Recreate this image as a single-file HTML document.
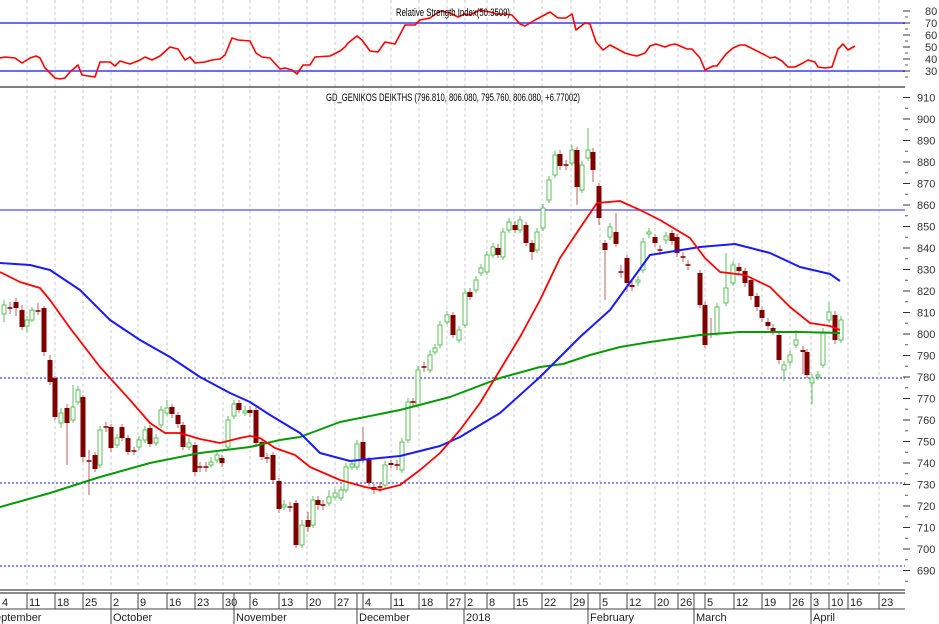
<!DOCTYPE html>
<html><head><meta charset="utf-8"><style>
html,body{margin:0;padding:0;background:#fff;width:939px;height:624px;overflow:hidden}
svg{display:block;font-family:"Liberation Sans",sans-serif}
</style></head><body>
<svg id="s" width="939" height="624" xmlns="http://www.w3.org/2000/svg"></svg>
<script>
var s=document.getElementById('s'),h='';
var W=905;
var ticks=[27,55,83,111,138,167,195,223,250,279,307,335,363,391,419,447,465,487,514,542,571,600,627,655,678,705,734,762,790,811,829,848,879];
// grid
ticks.forEach(function(x){h+='<line x1="'+x+'" y1="0" x2="'+x+'" y2="588" stroke="#c8c8c8" stroke-dasharray="3,3"/>';});
// RSI panel
h+='<line x1="0" y1="23" x2="'+W+'" y2="23" stroke="#6b6bf5" stroke-width="2"/>';
h+='<line x1="0" y1="71" x2="'+W+'" y2="71" stroke="#6b6bf5" stroke-width="2"/>';
h+='<line x1="0" y1="87" x2="'+W+'" y2="87" stroke="#333" stroke-width="1.2"/>';
var rsi=[[0,58],[5,57],[15,58],[22,63],[30,58],[36,56],[40,58],[45,68],[55,78],[60,79],[65,78],[70,72],[78,65],[82,75],[95,77],[100,62],[110,62],[115,66],[120,61],[130,64],[140,60],[145,57],[152,60],[160,56],[170,47],[178,49],[185,60],[190,57],[195,63],[205,62],[212,60],[220,59],[225,55],[232,38],[238,40],[250,41],[256,53],[262,57],[270,58],[280,69],[285,68],[292,70],[297,74],[303,65],[310,65],[315,57],[330,56],[340,51],[345,47],[348,43],[357,36],[362,40],[370,51],[378,52],[385,42],[395,44],[405,25],[415,25],[420,20],[430,18],[440,11],[450,13],[458,17],[465,14],[470,15],[480,10],[490,12],[497,14],[505,14],[512,15],[520,24],[525,26],[535,20],[550,12],[558,18],[566,18],[572,14],[576,30],[585,23],[590,24],[596,42],[603,50],[610,45],[625,53],[632,55],[637,56],[645,53],[650,46],[656,44],[665,47],[670,45],[675,44],[680,46],[687,49],[692,49],[700,58],[705,70],[713,66],[717,66],[726,54],[733,48],[740,45],[745,45],[755,50],[765,55],[770,58],[775,57],[782,61],[788,67],[795,67],[803,63],[808,60],[815,62],[818,67],[825,68],[832,67],[838,49],[843,44],[848,50],[855,46]];
function pl(a,c,w){return '<polyline fill="none" stroke="'+c+'" stroke-width="'+w+'" stroke-linejoin="round" points="'+a.map(function(p){return p.join(',')}).join(' ')+'"/>';}
h+=pl(rsi,'#f00',1.6);
h+='<text x="396" y="16" font-size="11" textLength="114" lengthAdjust="spacingAndGlyphs" fill="#000">Relative Strength Index(50.3509)</text>';
h+='<text x="326" y="101" font-size="11" textLength="254" lengthAdjust="spacingAndGlyphs" fill="#000">GD_GENIKOS DEIKTHS (796.810, 806.080, 795.760, 806.080, +6.77002)</text>';
// horizontal levels
h+='<line x1="0" y1="210" x2="'+W+'" y2="210" stroke="#6b6bf5" stroke-width="1.6"/>';
[378,483,566].forEach(function(y){h+='<line x1="0" y1="'+y+'" x2="'+W+'" y2="'+y+'" stroke="#4040f0" stroke-width="1.2" stroke-dasharray="2,2"/>';});
// MAs
var g=[[0,507],[50,493],[100,477],[150,463],[200,453],[250,447],[280,440],[300,437],[340,422],[400,410],[450,397],[500,378],[540,367],[563,364],[590,355],[620,347],[650,342],[700,335],[740,332],[800,332],[840,333]];
var b=[[0,263],[30,265],[50,270],[80,290],[110,320],[140,340],[170,357],[200,377],[230,393],[250,402],[270,415],[300,433],[320,453],[350,461],[400,456],[440,446],[460,437],[500,413],[540,377],[580,337],[610,310],[650,255],[700,247],[735,244],[770,253],[800,267],[830,274],[840,281]];
var r=[[0,272],[20,282],[40,288],[50,300],[70,328],[100,367],[130,400],[150,423],[165,433],[180,433],[200,439],[220,443],[240,438],[250,436],[260,438],[275,448],[295,455],[310,467],[340,480],[365,487],[380,490],[400,485],[420,470],[440,453],[460,430],[480,403],[500,370],[520,337],[540,300],[560,258],[580,228],[597,203],[620,201],[640,210],[660,220],[690,238],[705,258],[720,272],[745,275],[770,287],[790,307],[810,323],[830,326],[840,330]];
// candles [x,o,c,hi,lo]
var C=[[4,314,305,300,322],[10,308,308,302,314],[16,302,308,298,316],[22,310,327,305,330],[27,326,320,316,333],[32,320,310,307,322],[38,311,311,303,315],[44,308,352,306,356],[50,360,382,355,385],[55,378,417,376,420],[61,423,413,408,428],[67,408,423,404,465],[73,420,407,385,423],[78,402,390,386,405],[83,397,457,395,462],[89,461,461,450,495],[95,455,469,452,472],[100,465,430,426,468],[106,427,427,422,432],[111,427,448,424,452],[117,445,438,434,448],[122,427,438,424,441],[128,438,452,435,455],[134,451,451,447,455],[139,447,440,436,450],[145,440,430,426,443],[150,428,444,425,447],[156,443,438,434,446],[161,425,410,406,428],[167,413,408,400,416],[172,407,414,404,418],[178,415,424,412,428],[183,425,447,422,450],[189,447,443,438,450],[195,445,472,442,476],[200,467,467,462,472],[206,467,467,462,472],[211,465,462,457,468],[217,460,455,450,463],[222,458,463,455,467],[228,447,420,416,450],[234,416,404,400,419],[239,403,410,400,413],[245,413,411,406,416],[250,410,413,406,417],[256,410,443,406,447],[262,442,457,439,460],[267,458,458,453,463],[273,455,480,452,484],[279,481,509,478,513],[284,507,505,500,510],[290,507,507,502,512],[296,503,545,500,548],[302,545,525,520,548],[308,520,527,512,532],[313,525,500,496,528],[318,500,505,496,510],[323,505,505,500,510],[329,503,497,490,506],[335,497,493,489,500],[341,498,490,486,501],[346,490,467,463,493],[352,467,464,460,470],[357,467,444,440,470],[363,442,460,427,463],[369,460,483,457,486],[374,487,490,484,494],[380,487,487,482,492],[385,485,465,461,488],[391,463,465,460,468],[397,465,465,460,470],[402,470,442,438,473],[408,440,402,398,443],[413,402,402,398,406],[418,405,370,366,408],[424,367,367,362,372],[430,370,355,350,373],[435,352,348,344,355],[440,345,325,321,348],[447,322,315,311,325],[453,315,335,312,338],[459,340,330,326,343],[465,325,293,289,328],[470,292,297,288,300],[476,290,280,276,293],[481,273,268,264,276],[487,272,255,251,275],[493,255,247,243,258],[498,248,255,244,258],[503,257,232,228,260],[509,230,222,218,233],[515,225,230,221,233],[520,230,220,216,233],[526,225,243,222,246],[532,243,252,240,260],[537,250,232,228,253],[543,228,208,204,231],[549,200,180,176,203],[555,175,155,151,178],[560,154,166,150,170],[566,165,165,160,170],[572,163,150,145,166],[577,150,187,147,205],[582,190,165,161,193],[588,158,150,128,161],[593,152,170,148,182],[599,186,218,183,225],[605,243,250,240,300],[610,237,227,223,240],[616,232,244,213,247],[621,272,272,265,278],[627,258,283,255,292],[632,285,287,281,291],[638,282,280,276,286],[643,270,242,238,273],[649,234,232,228,238],[655,237,243,234,247],[660,250,250,245,255],[666,240,236,232,244],[672,233,241,230,245],[677,237,253,234,257],[683,257,257,252,262],[688,265,265,260,270],[700,273,305,270,308],[705,305,345,302,348],[711,334,334,318,338],[717,333,307,303,336],[726,303,288,253,306],[733,283,265,261,286],[739,267,271,263,275],[745,271,283,268,287],[751,280,296,277,300],[757,296,307,293,311],[762,310,318,307,322],[768,322,326,318,330],[773,328,331,324,335],[779,335,360,332,364],[784,370,365,361,381],[790,362,355,351,366],[796,345,340,330,348],[803,350,352,346,374],[807,352,375,349,378],[812,383,378,374,404],[818,377,375,371,380],[823,365,332,328,368],[829,320,312,302,323],[835,315,340,311,344],[841,340,320,316,343]];
C.forEach(function(c){var x=c[0],o=c[1],cl=c[2],hi=c[3],lo=c[4];var up=cl<o||(cl==o&&false);var top=Math.min(o,cl),bh=Math.max(Math.abs(cl-o),1);
 if(cl==o){h+='<line x1="'+x+'" y1="'+hi+'" x2="'+x+'" y2="'+lo+'" stroke="#c06060"/><line x1="'+(x-2.5)+'" y1="'+o+'" x2="'+(x+2.5)+'" y2="'+o+'" stroke="#800000" stroke-width="1.5"/>';return;}
 if(up){h+='<line x1="'+x+'" y1="'+hi+'" x2="'+x+'" y2="'+lo+'" stroke="#5cc05c"/><rect x="'+(x-2)+'" y="'+top+'" width="4" height="'+bh+'" fill="#fff" stroke="#5cc05c"/>';}
 else{h+='<line x1="'+x+'" y1="'+hi+'" x2="'+x+'" y2="'+lo+'" stroke="#c06060"/><rect x="'+(x-2.5)+'" y="'+top+'" width="5" height="'+bh+'" fill="#800000"/>';}
});
h+=pl(g,'#089a08',2)+pl(b,'#1a1aff',2)+pl(r,'#f00',1.8);
// right axis
for(var v=30;v<=80;v+=10){var y=23+(70-v)*1.2;h+='<line x1="903" y1="'+y+'" x2="910" y2="'+y+'" stroke="#333"/><text x="925" y="'+(y+4)+'" font-size="11" fill="#333">'+v+'</text>';h+='<line x1="905" y1="'+(y+6)+'" x2="908" y2="'+(y+6)+'" stroke="#555"/>';}
for(var v=690;v<=910;v+=10){var y=205+(860-v)*2.15;h+='<line x1="903" y1="'+y+'" x2="910" y2="'+y+'" stroke="#333"/><text x="917" y="'+(y+4)+'" font-size="11" fill="#333">'+v+'</text>';h+='<line x1="905" y1="'+(y+10.75)+'" x2="908" y2="'+(y+10.75)+'" stroke="#555"/>';}
// bottom axis
h+='<line x1="0" y1="590" x2="'+W+'" y2="590" stroke="#444" stroke-width="1.2"/><line x1="0" y1="593" x2="'+W+'" y2="593" stroke="#444" stroke-width="1.2"/><line x1="0" y1="609" x2="'+W+'" y2="609" stroke="#444"/>';
var lab=['4','11','18','25','2','9','16','23','30','6','13','20','27','4','11','18','27','2','8','15','22','29','5','12','20','26','5','12','19','26','3','10','16','23'];
var lx=[0,27,55,83,111,138,167,195,223,250,279,307,335,363,391,419,447,465,487,514,542,571,600,627,655,678,705,734,762,790,811,829,848,879];
lx.forEach(function(x,i){if(x>0)h+='<line x1="'+x+'" y1="593" x2="'+x+'" y2="609" stroke="#444"/>';h+='<text x="'+(x+2)+'" y="606" font-size="11" fill="#222">'+lab[i]+'</text>';});
[[234],[357],[588],[694]].forEach(function(a){h+='<line x1="'+a[0]+'" y1="593" x2="'+a[0]+'" y2="609" stroke="#444"/>';});
var mon=[[-7,'eptember'],[111,'October'],[234,'November'],[357,'December'],[464,'2018'],[588,'February'],[694,'March'],[811,'April']];
mon.forEach(function(m){if(m[0]>0)h+='<line x1="'+m[0]+'" y1="609" x2="'+m[0]+'" y2="624" stroke="#444"/>';h+='<text x="'+(m[0]+2)+'" y="621" font-size="11" fill="#222">'+m[1]+'</text>';});
s.innerHTML=h;
</script>
</body></html>
